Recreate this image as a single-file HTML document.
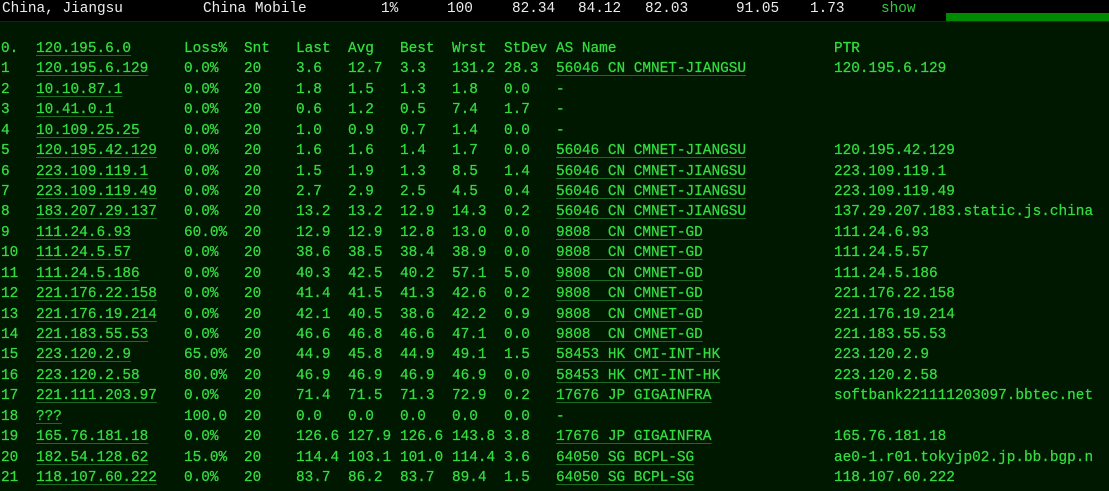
<!DOCTYPE html>
<html><head><meta charset="utf-8"><style>
*{margin:0;padding:0}
html,body{width:1109px;height:491px;overflow:hidden;background:#001800}
body{font-family:"Liberation Mono",monospace;font-size:14.4px;color:#34dc40;position:relative}
#hdr{position:absolute;left:0;top:0;width:1109px;height:21px;background:#000;border-bottom:1px solid #0a2a0a;color:#ececec}
#hdr span{position:absolute;top:0;line-height:19px;white-space:pre}
#bar{position:absolute;left:946px;top:13px;width:163px;height:8px;background:#008a00}
.r{position:absolute;left:0;width:1109px;height:20px;line-height:20px}
.r span{position:absolute;top:0;white-space:pre;-webkit-text-stroke:0.25px #34dc40}
u{text-decoration:underline;text-decoration-color:#1d6a24;text-underline-offset:3px}
</style></head><body>
<div id="hdr">
<span style="left:2px">China, Jiangsu</span>
<span style="left:203px">China Mobile</span>
<span style="left:381px">1%</span>
<span style="left:447px">100</span>
<span style="left:512px">82.34</span>
<span style="left:578px">84.12</span>
<span style="left:645px">82.03</span>
<span style="left:736px">91.05</span>
<span style="left:810px">1.73</span>
<span style="left:881px;color:#2ec83a">show</span>
<div id="bar"></div>
</div>
<div id="rows"></div>
<script>
var d=[
["0.","120.195.6.0","Loss%","Snt","Last","Avg","Best","Wrst","StDev","AS Name","PTR",1],
["1","120.195.6.129","0.0%","20","3.6","12.7","3.3","131.2","28.3","56046 CN CMNET-JIANGSU","120.195.6.129"],
["2","10.10.87.1","0.0%","20","1.8","1.5","1.3","1.8","0.0","-",""],
["3","10.41.0.1","0.0%","20","0.6","1.2","0.5","7.4","1.7","-",""],
["4","10.109.25.25","0.0%","20","1.0","0.9","0.7","1.4","0.0","-",""],
["5","120.195.42.129","0.0%","20","1.6","1.6","1.4","1.7","0.0","56046 CN CMNET-JIANGSU","120.195.42.129"],
["6","223.109.119.1","0.0%","20","1.5","1.9","1.3","8.5","1.4","56046 CN CMNET-JIANGSU","223.109.119.1"],
["7","223.109.119.49","0.0%","20","2.7","2.9","2.5","4.5","0.4","56046 CN CMNET-JIANGSU","223.109.119.49"],
["8","183.207.29.137","0.0%","20","13.2","13.2","12.9","14.3","0.2","56046 CN CMNET-JIANGSU","137.29.207.183.static.js.china"],
["9","111.24.6.93","60.0%","20","12.9","12.9","12.8","13.0","0.0","9808  CN CMNET-GD","111.24.6.93"],
["10","111.24.5.57","0.0%","20","38.6","38.5","38.4","38.9","0.0","9808  CN CMNET-GD","111.24.5.57"],
["11","111.24.5.186","0.0%","20","40.3","42.5","40.2","57.1","5.0","9808  CN CMNET-GD","111.24.5.186"],
["12","221.176.22.158","0.0%","20","41.4","41.5","41.3","42.6","0.2","9808  CN CMNET-GD","221.176.22.158"],
["13","221.176.19.214","0.0%","20","42.1","40.5","38.6","42.2","0.9","9808  CN CMNET-GD","221.176.19.214"],
["14","221.183.55.53","0.0%","20","46.6","46.8","46.6","47.1","0.0","9808  CN CMNET-GD","221.183.55.53"],
["15","223.120.2.9","65.0%","20","44.9","45.8","44.9","49.1","1.5","58453 HK CMI-INT-HK","223.120.2.9"],
["16","223.120.2.58","80.0%","20","46.9","46.9","46.9","46.9","0.0","58453 HK CMI-INT-HK","223.120.2.58"],
["17","221.111.203.97","0.0%","20","71.4","71.5","71.3","72.9","0.2","17676 JP GIGAINFRA","softbank221111203097.bbtec.net"],
["18","???","100.0","20","0.0","0.0","0.0","0.0","0.0","-",""],
["19","165.76.181.18","0.0%","20","126.6","127.9","126.6","143.8","3.8","17676 JP GIGAINFRA","165.76.181.18"],
["20","182.54.128.62","15.0%","20","114.4","103.1","101.0","114.4","3.6","64050 SG BCPL-SG","ae0-1.r01.tokyjp02.jp.bb.bgp.n"],
["21","118.107.60.222","0.0%","20","83.7","86.2","83.7","89.4","1.5","64050 SG BCPL-SG","118.107.60.222"]];
var L=[1,36,184,244,296,348,400,452,504,556,834],h="";
d.forEach(function(r,i){h+='<div class="r" style="top:'+(39+i*20.43)+'px">';
for(var c=0;c<11;c++){var t=r[c];if(!t)continue;
if(c==1||(c==9&&t!="-"&&!r[11]))t="<u>"+t+"</u>";
h+='<span style="left:'+L[c]+'px">'+t+'</span>';}
h+='</div>';});
document.getElementById("rows").innerHTML=h;
</script>
</body></html>
